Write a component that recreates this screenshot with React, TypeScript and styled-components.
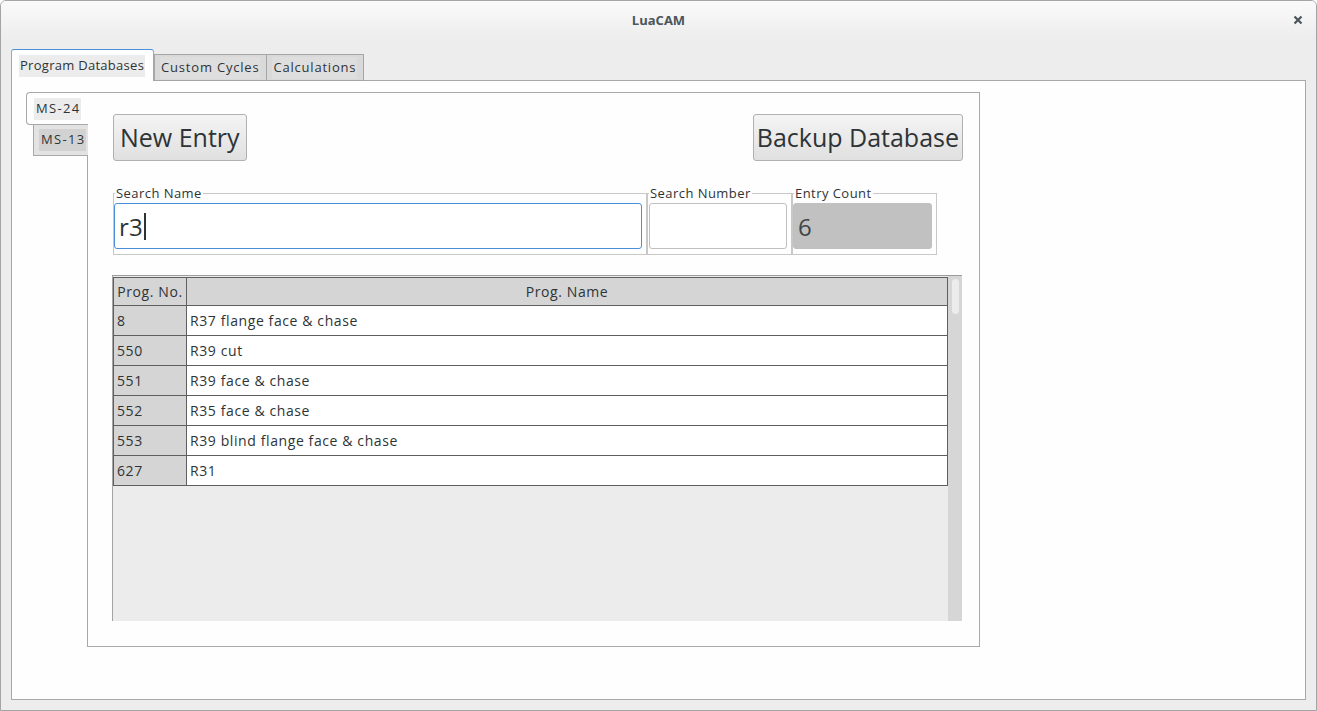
import React from "react";
import styled, { createGlobalStyle, css } from "styled-components";

const Global = createGlobalStyle`
  html, body { margin: 0; padding: 0; background: #ffffff; }
  body { font-family: "Open Sans", "DejaVu Sans", sans-serif; color: #2e3436; letter-spacing: 0.45px; }
  * { box-sizing: border-box; }
`;

const Window = styled.div`
  width: 1317px;
  height: 711px;
  border: 1px solid #a4a4a4;
  border-radius: 6px 6px 0 0;
  background: #ededed;
  display: flex;
  flex-direction: column;
  overflow: hidden;
`;

const TitleBar = styled.div`
  height: 38px;
  flex: none;
  position: relative;
  display: flex;
  align-items: center;
  justify-content: center;
  background: linear-gradient(#fafafa, #ededed);
  font-size: 13px;
  font-weight: 700;
  letter-spacing: 0;
  color: #4b555b;
`;

const CloseBtn = styled.div`
  position: absolute;
  right: 13px;
  top: 14px;
  width: 10px;
  height: 10px;
  display: flex;
`;

const Body = styled.div`
  flex: 1;
  display: flex;
  flex-direction: column;
  padding: 10px;
  min-height: 0;
`;

const TabStrip = styled.div`
  display: flex;
  align-items: flex-end;
  height: 32px;
  flex: none;
  margin-bottom: -1px;
  position: relative;
  z-index: 1;
`;

const Tab = styled.div<{ $active?: boolean }>`
  display: flex;
  align-items: center;
  font-size: 13px;
  border: 1px solid #a6a6a6;
  border-right: none;
  white-space: nowrap;
  ${(p) =>
    p.$active
      ? css`
          height: 32px;
          background: #fefefe;
          border-top: 1px solid #4a90d9;
          border-radius: 3px 3px 0 0;
          border-bottom: none;
          padding: 0 8px 0 7px;
          border-right: 1px solid #a6a6a6;
          letter-spacing: 0.28px;
        `
      : css`
          height: 27px;
          background: #d9d9d9;
          padding: 0 6px 0 5px;
          letter-spacing: 0.8px;
          &:last-child {
            border-right: 1px solid #a6a6a6;
          }
        `}
`;

const TabLabel = styled.span<{ $active?: boolean }>`
  background: ${(p) => (p.$active ? "#ececec" : "#dedede")};
  padding: 2px 1px 3px;
  line-height: 17px;
`;

const Panel = styled.div`
  flex: 1;
  background: #fefefe;
  border: 1px solid #a8a8a8;
  padding: 11px 14px;
  display: flex;
  align-items: flex-start;
`;

const VTabs = styled.div`
  display: flex;
  flex-direction: column;
  width: 62px;
  flex: none;
  margin-right: -1px;
  position: relative;
  z-index: 1;
`;

const VTab = styled.div<{ $active?: boolean }>`
  display: flex;
  align-items: center;
  font-size: 13px;
  border: 1px solid #a8a8a8;
  border-right: none;
  ${(p) =>
    p.$active
      ? css`
          height: 33px;
          background: #fefefe;
          border-radius: 4px 0 0 4px;
          padding-left: 7px;
        `
      : css`
          height: 31px;
          margin-left: 7px;
          border-top: none;
          background: #e3e3e3;
          padding-left: 5px;
        `}
`;

const VTabLabel = styled.span<{ $active?: boolean }>`
  background: ${(p) => (p.$active ? "#ececec" : "#d2d2d2")};
  padding: 2px 1px 3px 2px;
  line-height: 17px;
  letter-spacing: 1.3px;
`;

const InnerPanel = styled.div`
  width: 893px;
  height: 555px;
  border: 1px solid #a8a8a8;
  padding: 21px 16px 0 24px;
  display: flex;
  flex-direction: column;
`;

const ButtonRow = styled.div`
  display: flex;
  justify-content: space-between;
  padding-left: 1px;
`;

const BigButton = styled.button<{ $pad: number }>`
  height: 47px;
  padding: 0 ${(p) => p.$pad}px;
  font-family: "Open Sans", "DejaVu Sans", sans-serif;
  font-size: 25px;
  letter-spacing: 0;
  color: #2e3436;
  border: 1px solid #b1b1b1;
  border-radius: 3px;
  background: linear-gradient(#f4f4f4, #e0e0e0);
  line-height: 1;
`;

const FieldRow = styled.div`
  display: flex;
  margin-top: 25px;
  padding-left: 1px;
`;

const Group = styled.fieldset<{ $w: number }>`
  width: ${(p) => p.$w}px;
  margin: 0;
  padding: 0 4px 5px 0;
  border: 1px solid #c8c8c8;
  min-width: 0;
`;

const Legend = styled.legend`
  font-size: 13px;
  line-height: 15px;
  padding: 0 1px;
  margin-left: 1px;
  color: #2e3436;
`;

const Field = styled.div<{ $focus?: boolean; $disabled?: boolean; $inset?: number }>`
  height: 46px;
  margin-top: 2px;
  margin-left: ${(p) => p.$inset ?? 0}px;
  border: 1px solid ${(p) => (p.$focus ? "#4a90d9" : "#c0c0c0")};
  border-radius: 3px;
  background: ${(p) => (p.$disabled ? "#c1c1c1" : "#ffffff")};
  display: flex;
  align-items: center;
  padding-left: 4px;
  font-size: 24px;
  letter-spacing: 0.3px;
  color: ${(p) => (p.$disabled ? "#3f4547" : "#2e3436")};
`;

const Caret = styled.span`
  display: inline-block;
  width: 2px;
  height: 27px;
  background: #2e3436;
  margin-left: 1px;
`;

const ScrollArea = styled.div`
  margin-top: 20px;
  width: 850px;
  height: 346px;
  border-top: 1px solid #9c9c9c;
  border-left: 1px solid #a4a4a4;
  background: #ececec;
  display: flex;
  align-items: flex-start;
`;

const Table = styled.table`
  margin-top: 1px;
  width: 835px;
  border-collapse: collapse;
  font-size: 14px;
  letter-spacing: 0.6px;
  background: #ffffff;
  table-layout: fixed;
`;

const Th = styled.th`
  height: 28px;
  background: #d5d5d5;
  border: 1px solid #5f5f5f;
  font-weight: 400;
  padding: 0 3px;
  white-space: nowrap;
  text-align: center;
  color: #2e3436;
`;

const Td = styled.td<{ $key?: boolean }>`
  height: 30px;
  border: 1px solid #5f5f5f;
  padding: 0 3px;
  text-align: left;
  white-space: nowrap;
  background: ${(p) => (p.$key ? "#d5d5d5" : "#ffffff")};
  color: #2e3436;
`;

const ScrollBar = styled.div`
  width: 14px;
  margin-left: auto;
  align-self: stretch;
  background: #d6d6d6;
  display: flex;
  justify-content: center;
  padding-top: 3px;
`;

const Thumb = styled.div`
  width: 7px;
  height: 35px;
  border-radius: 4px;
  background: #ececec;
`;

const rows: [string, string][] = [
  ["8", "R37 flange face & chase"],
  ["550", "R39 cut"],
  ["551", "R39 face & chase"],
  ["552", "R35 face & chase"],
  ["553", "R39 blind flange face & chase"],
  ["627", "R31"],
];

export default function App() {
  return (
    <>
      <Global />
      <Window>
        <TitleBar>
          LuaCAM
          <CloseBtn>
            <svg width="10" height="10" viewBox="0 0 10 10">
              <path d="M1.5 1.5 L8.5 8.5 M8.5 1.5 L1.5 8.5" stroke="#4b555b" strokeWidth="2.2" />
            </svg>
          </CloseBtn>
        </TitleBar>
        <Body>
          <TabStrip>
            <Tab $active>
              <TabLabel $active>Program Databases</TabLabel>
            </Tab>
            <Tab>
              <TabLabel>Custom Cycles</TabLabel>
            </Tab>
            <Tab>
              <TabLabel>Calculations</TabLabel>
            </Tab>
          </TabStrip>
          <Panel>
            <VTabs>
              <VTab $active>
                <VTabLabel $active>MS-24</VTabLabel>
              </VTab>
              <VTab>
                <VTabLabel>MS-13</VTabLabel>
              </VTab>
            </VTabs>
            <InnerPanel>
              <ButtonRow>
                <BigButton $pad={6}>New Entry</BigButton>
                <BigButton $pad={3}>Backup Database</BigButton>
              </ButtonRow>
              <FieldRow>
                <Group $w={534}>
                  <Legend>Search Name</Legend>
                  <Field $focus>
                    r3
                    <Caret />
                  </Field>
                </Group>
                <Group $w={145}>
                  <Legend>Search Number</Legend>
                  <Field $inset={1} />
                </Group>
                <Group $w={145}>
                  <Legend>Entry Count</Legend>
                  <Field $disabled>6</Field>
                </Group>
              </FieldRow>
              <ScrollArea>
                <Table>
                  <colgroup>
                    <col style={{ width: 73 }} />
                    <col />
                  </colgroup>
                  <thead>
                    <tr>
                      <Th>Prog. No.</Th>
                      <Th>Prog. Name</Th>
                    </tr>
                  </thead>
                  <tbody>
                    {rows.map(([n, name]) => (
                      <tr key={n}>
                        <Td $key>{n}</Td>
                        <Td>{name}</Td>
                      </tr>
                    ))}
                  </tbody>
                </Table>
                <ScrollBar>
                  <Thumb />
                </ScrollBar>
              </ScrollArea>
            </InnerPanel>
          </Panel>
        </Body>
      </Window>
    </>
  );
}
